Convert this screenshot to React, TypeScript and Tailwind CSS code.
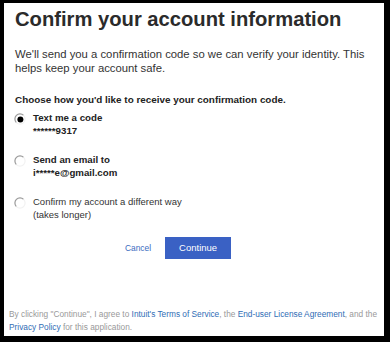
import React from "react";

function Radio({ checked }: { checked?: boolean }) {
  return (
    <svg width="12" height="12" viewBox="0 0 12 12" className="shrink-0">
      <circle cx="6" cy="6" r="5" fill="#fff" />
      <path d="M9.6 2.4 A5 5 0 0 0 2.4 9.6" fill="none" stroke="#9a9a9a" strokeWidth="1.2" />
      <path d="M9.6 2.4 A5 5 0 0 1 2.4 9.6" fill="none" stroke="#f2f2f2" strokeWidth="1.2" />
      {checked && <circle cx="6.4" cy="6.6" r="3" fill="#000" />}
    </svg>
  );
}

function Option({
  checked,
  bold,
  line1,
  line2,
}: {
  checked?: boolean;
  bold?: boolean;
  line1: string;
  line2: string;
}) {
  return (
    <div className="flex items-start">
      <div className="ml-[-1px] mt-[2px] mr-[7px]">
        <Radio checked={checked} />
      </div>
      <div
        className={
          bold
            ? "text-[9.7px] leading-[13px] font-bold text-[#222]"
            : "text-[9.5px] leading-[13px] text-[#333]"
        }
      >
        <div>{line1}</div>
        <div>{line2}</div>
      </div>
    </div>
  );
}

export default function App() {
  return (
    <div
      className="w-[390px] h-[342px] bg-black pt-[3px] pl-[4px] pr-[6px] pb-[6px]"
      style={{ fontFamily: '"Liberation Sans", Arial, sans-serif' }}
    >
      <div className="w-full h-full bg-white pl-[11px] pr-[6px] pt-[4px] flex flex-col">
        <h1 className="text-[20.2px] leading-[24px] font-bold text-[#2b2b2b]">
          Confirm your account information
        </h1>
        <p className="mt-[16px] text-[11.3px] leading-[14px] text-[#333]">
          We'll send you a confirmation code so we can verify your identity. This helps keep your account safe.
        </p>
        <p className="mt-[18px] text-[9.9px] leading-[13px] font-bold text-[#222]">
          Choose how you'd like to receive your confirmation code.
        </p>
        <div className="mt-[5px] flex flex-col gap-[16px]">
          <Option checked bold line1="Text me a code" line2="******9317" />
          <Option bold line1="Send an email to" line2="i*****e@gmail.com" />
          <Option line1="Confirm my account a different way" line2="(takes longer)" />
        </div>
        <div className="mt-[16px] flex items-center pl-[110px] gap-[14px]">
          <span className="text-[8.4px] leading-[10px] text-[#3a6cc0]">Cancel</span>
          <button className="w-[66px] h-[22px] bg-[#3a61c4] text-white text-[9.5px] leading-[22px] text-center">
            Continue
          </button>
        </div>
        <div className="mt-auto mb-[2px] ml-[-6px] mr-[-4px] text-[8.3px] leading-[13px] text-[#999]">
          By clicking "Continue", I agree to <span className="text-[#2f6db5]">Intuit's Terms of Service</span>, the{" "}
          <span className="text-[#2f6db5]">End-user License Agreement</span>, and the{" "}
          <span className="text-[#2f6db5]">Privacy Policy</span> for this application.
        </div>
      </div>
    </div>
  );
}
